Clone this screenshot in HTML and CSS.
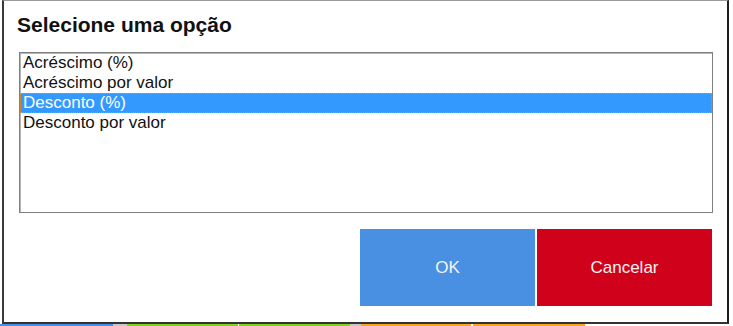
FILE: index.html
```html
<!DOCTYPE html>
<html lang="pt">
<head>
<meta charset="utf-8">
<title>Selecione uma opção</title>
<link rel="stylesheet" href="styles.css">
</head>
<body>
<div class="dialog">
  <h1 class="title">Selecione uma opção</h1>
  <div class="listbox">
    <div class="item">Acréscimo (%)</div>
    <div class="item">Acréscimo por valor</div>
    <div class="item selected">Desconto (%)</div>
    <div class="item">Desconto por valor</div>
  </div>
  <div class="actions">
    <button class="btn btn-ok">OK</button>
    <button class="btn btn-cancel">Cancelar</button>
  </div>
</div>
<div class="strips">
  <span class="seg s-blue" style="width:113px"></span>
  <span class="seg s-gray" style="width:14px"></span>
  <span class="seg s-green" style="width:111px"></span>
  <span class="seg s-white" style="width:1px"></span>
  <span class="seg s-green" style="width:111px"></span>
  <span class="seg s-gray" style="width:11px"></span>
  <span class="seg s-orange" style="width:110px"></span>
  <span class="seg s-white" style="width:2px"></span>
  <span class="seg s-orange" style="width:112px"></span>
</div>
</body>
</html>
```
FILE: styles.css
```css
html, body {
  margin: 0;
  padding: 0;
  background: #ffffff;
  width: 733px;
  height: 326px;
  overflow: hidden;
  font-family: "Liberation Sans", Arial, sans-serif;
}

.dialog {
  box-sizing: border-box;
  margin-left: 2px;
  width: 727px;
  height: 324px;
  background: #ffffff;
  border-top: 1px solid #9a9a9a;
  border-left: 2px solid #3a3a3a;
  border-right: 2px solid #1e1e1e;
  border-bottom: 2px solid #333333;
  padding-top: 12px;
  display: flex;
  flex-direction: column;
}

.title {
  margin: 0 0 0 13px;
  font-size: 21px;
  font-weight: bold;
  line-height: 24px;
  color: #111111;
}

.listbox {
  margin: 15px 14px 0 15px;
  height: 161px;
  box-sizing: border-box;
  border: 1px solid #7f7f7f;
  box-shadow: inset 1px 1px 0 #b5b5b5;
  background: #ffffff;
  display: flex;
  flex-direction: column;
}

.item {
  height: 20px;
  line-height: 20px;
  font-size: 17px;
  color: #111111;
  padding-left: 3px;
  white-space: nowrap;
}

.item.selected {
  background: #3399ff;
  color: #ffffff;
  outline: 1px dotted #e0903a;
  outline-offset: -1px;
}

.actions {
  display: flex;
  justify-content: flex-end;
  gap: 2px;
  margin: 16px 15px 0 0;
}

.btn {
  width: 175px;
  height: 77px;
  border: none;
  padding: 0;
  font-family: "Liberation Sans", Arial, sans-serif;
  font-size: 17px;
  color: #f4f4f4;
  cursor: pointer;
}

.btn-ok {
  background: #4a90e2;
}

.btn-cancel {
  background: #d0021b;
}

.strips {
  display: flex;
  height: 2px;
}

.seg {
  display: block;
  height: 2px;
}

.s-blue { background: #4a90e2; }
.s-gray { background: #c8c8c8; }
.s-green { background: #7ed321; }
.s-white { background: #ffffff; }
.s-orange { background: #f5a623; }
```
